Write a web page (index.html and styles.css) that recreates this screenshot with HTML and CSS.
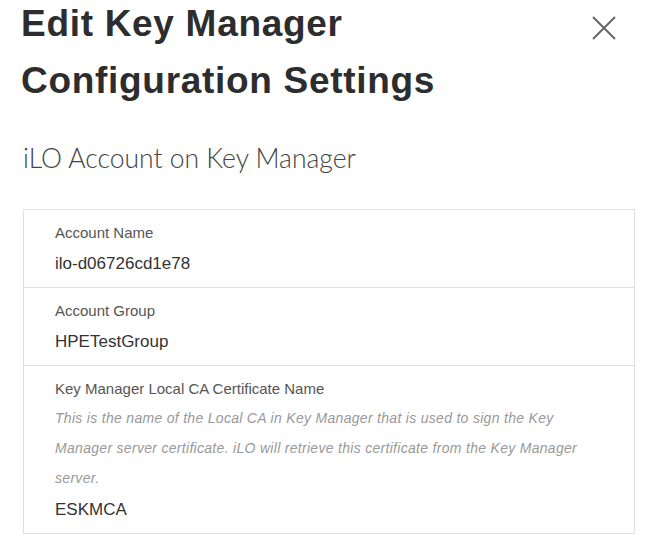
FILE: index.html
```html
<!DOCTYPE html>
<html lang="en">
<head>
  <meta charset="UTF-8" />
  <meta name="viewport" content="width=device-width, initial-scale=1.0"/>
  <title>Edit Key Manager Configuration Settings</title>
  <link rel="stylesheet" href="styles.css">
</head>
<body>
  <div class="dialog">
    <div class="dialog-header">
      <h1>Edit Key Manager Configuration Settings</h1>
      <button class="close-btn" aria-label="Close">
        <svg width="26" height="26" viewBox="0 0 26 26">
          <path d="M2 2 L24 24 M24 2 L2 24" stroke="#666" stroke-width="2" fill="none"/>
        </svg>
      </button>
    </div>

    <h2 class="subtitle">iLO Account on Key Manager</h2>

    <div class="field-list">
      <div class="field">
        <div class="field-label">Account Name</div>
        <div class="field-value">ilo-d06726cd1e78</div>
      </div>
      <div class="field">
        <div class="field-label">Account Group</div>
        <div class="field-value">HPETestGroup</div>
      </div>
      <div class="field">
        <div class="field-label">Key Manager Local CA Certificate Name</div>
        <div class="field-help">This is the name of the Local CA in Key Manager that is used to sign the Key Manager server certificate. iLO will retrieve this certificate from the Key Manager server.</div>
        <div class="field-value">ESKMCA</div>
      </div>
    </div>
  </div>
</body>
</html>
```

FILE: styles.css
```css
body {
  margin: 0;
  font-family: 'Liberation Sans', Arial, sans-serif;
  background: #fff;
  color: #333;
}

.dialog {
  padding: 0 23px;
}

.dialog-header {
  display: flex;
  justify-content: space-between;
  align-items: flex-start;
}

h1 {
  margin: -5px 0 0 -2px;
  max-width: 450px;
  font-size: 37px;
  line-height: 57px;
  letter-spacing: 0.7px;
  font-weight: bold;
  color: #2d2d2d;
}

.close-btn {
  background: none;
  border: none;
  padding: 0;
  margin: 15px 18px 0 0;
  cursor: pointer;
  line-height: 0;
}

.subtitle {
  margin: 33px 0 0;
  font-family: Lato, 'Liberation Sans', sans-serif;
  font-weight: 300;
  font-size: 26.5px;
  line-height: 32px;
  color: #444;
}

.field-list {
  margin-top: 35px;
  border: 1px solid #e0e0e0;
}

.field {
  padding: 13px 20px 11px 31px;
  border-top: 1px solid #e0e0e0;
}

.field:first-child {
  border-top: none;
}

.field-label {
  font-size: 15px;
  line-height: 20px;
  color: #555;
}

.field-value {
  margin-top: 9px;
  font-size: 17px;
  line-height: 24px;
  color: #333;
}

.field-help {
  margin-top: 4px;
  font-size: 14px;
  line-height: 30px;
  letter-spacing: 0.3px;
  font-style: italic;
  color: #999;
}

.field-help + .field-value {
  margin-top: 5px;
}
```
